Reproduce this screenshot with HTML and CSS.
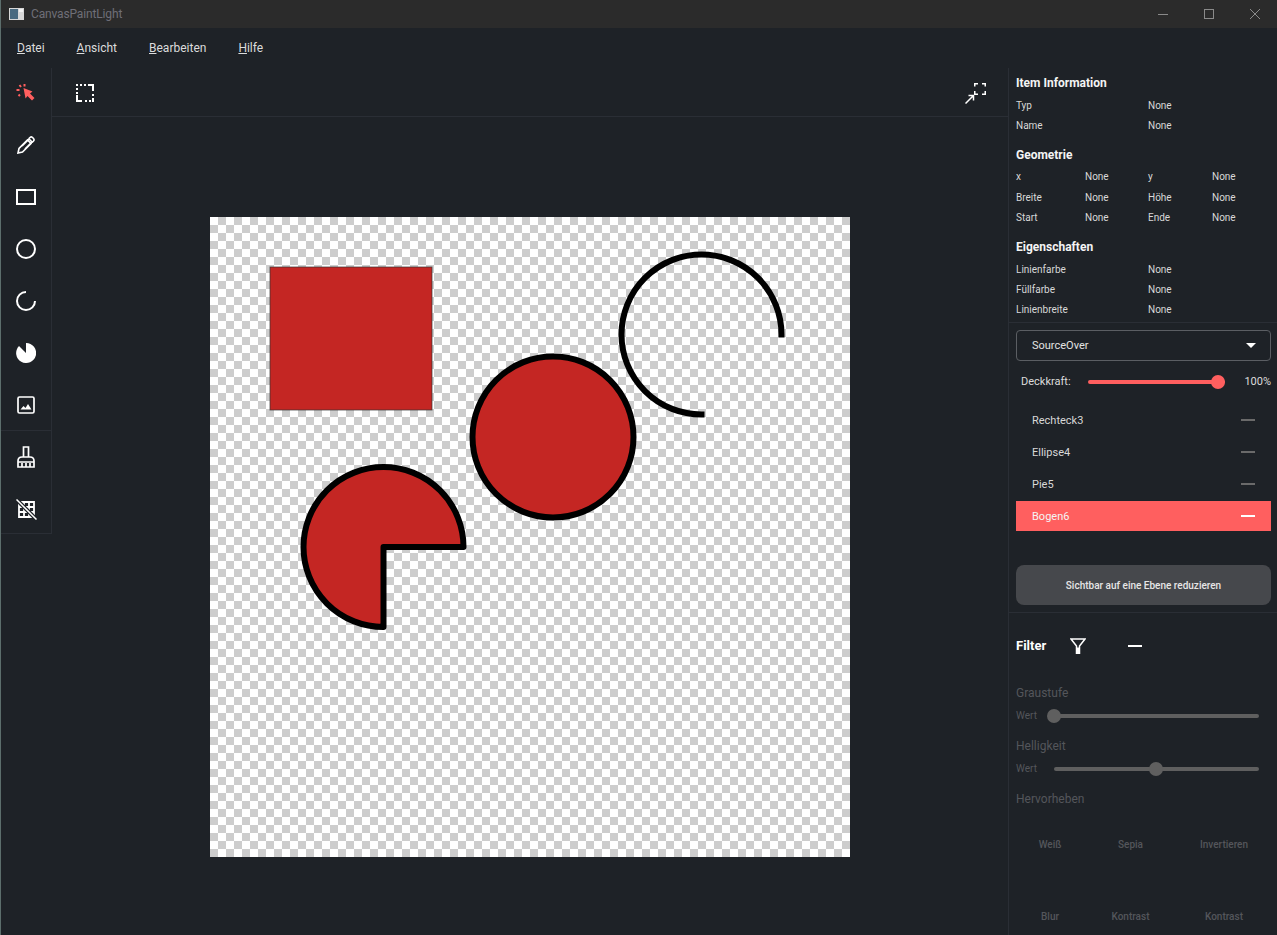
FILE: index.html
```html
<!doctype html>
<html lang="de">
<head>
    <meta charset="UTF-8">
    <title>CanvasPaintLight</title>
    <link rel="stylesheet" href="styles.css">
</head>
<body>
<div class="window">
    <div class="titlebar">
        <svg class="app-icon" width="15" height="12" viewBox="0 0 15 12"><rect width="15" height="12" fill="#d8d8d8"/><rect x="1" y="1" width="8" height="10" fill="#4a6a80"/><rect x="10" y="1" width="4" height="3" fill="#f2f2f2"/></svg>
        <span class="app-name">CanvasPaintLight</span>
        <div class="win-btns">
            <svg width="12" height="12" viewBox="0 0 12 12"><path d="M1 6.500h10" stroke="#8a8a8a" fill="none"/></svg>
            <svg width="12" height="12" viewBox="0 0 12 12"><rect x="1.500" y="1.500" width="9" height="9" stroke="#8a8a8a" fill="none"/></svg>
            <svg width="12" height="12" viewBox="0 0 12 12"><path d="M1 1l10 10M11 1L1 11" stroke="#8a8a8a" fill="none"/></svg>
        </div>
    </div>
    <div class="menubar">
        <span class="menu-item"><u>D</u>atei</span>
        <span class="menu-item"><u>A</u>nsicht</span>
        <span class="menu-item"><u>B</u>earbeiten</span>
        <span class="menu-item"><u>H</u>ilfe</span>
    </div>
    <div class="main">
        <div class="tools">
            <div class="tool-group">
                <div class="tool">
                    <svg width="20" height="20" viewBox="0 0 20 20" fill="none" stroke="#ff5f5f"><path d="M7.500 5l9 3.500-2.500 2 4.500 4.500-2.500 2.500-4.500-4.500-2 2.500z" fill="#ff5f5f" stroke="none"/><path d="M8.500 1v2.500M3.500 2l1.500 2M0.500 7h3M2.500 13l1.500-1.500" stroke-width="2"/></svg>
                </div>
                <div class="tool">
                    <svg width="18" height="18" viewBox="0 0 18 18" fill="none" stroke="#fff" stroke-width="1.600"><path d="M1 17l1-4.500L10.500 4l3.500 3.500L5.500 16z"/><path d="M5 10L12 3l3 3-7 7"/><path d="M12 2.500l1-1c.8-.7 1.700-.7 2.500 0l1 1c.7.800.7 1.700 0 2.500l-1.500 1.500"/></svg>
                </div>
                <div class="tool">
                    <svg width="20" height="16" viewBox="0 0 20 16" fill="none" stroke="#fff" stroke-width="2"><rect x="1" y="1" width="18" height="14"/></svg>
                </div>
                <div class="tool">
                    <svg width="20" height="20" viewBox="0 0 20 20" fill="none" stroke="#fff" stroke-width="2"><circle cx="10" cy="10" r="9"/></svg>
                </div>
                <div class="tool">
                    <svg width="20" height="20" viewBox="0 0 20 20" fill="none" stroke="#fff" stroke-width="2"><path d="M19 10a9 9 0 1 1-9-9"/></svg>
                </div>
                <div class="tool">
                    <svg width="20" height="20" viewBox="0 0 20 20" fill="#fff"><path d="M10 0a10 10 0 1 1-7 3l7 7z"/></svg>
                </div>
                <div class="tool">
                    <svg width="18" height="18" viewBox="0 0 18 18" fill="none"><rect x="1" y="1" width="16" height="16" rx="1.500" stroke="#fff" stroke-width="1.700"/><path d="M3.500 13.500l3-3.500 2 2 2.500-4 3.500 5.500z" fill="#fff"/></svg>
                </div>
            </div>
            <div class="tool-group">
                <div class="tool">
                    <svg width="18" height="22" viewBox="0 0 18 22" fill="none" stroke="#fff" stroke-width="1.700"><path d="M6.500 11V1h5v10M1 21v-6c0-2.500 1.500-4 4-4h8c2.500 0 4 1.500 4 4v6zM1 16h16M5 21v-4M9 21v-4M13 21v-4"/></svg>
                </div>
                <div class="tool">
                    <svg width="21" height="21" viewBox="0 0 21 21" fill="none"><path d="M3 3h15v15H3zM8 3v15M13 3v15M3 8h15M3 13h15" stroke="#fff" stroke-width="1.800"/><path d="M1 1l19 19" stroke="#1e2227" stroke-width="4"/><path d="M0.500 0.500l20 20" stroke="#fff" stroke-width="1.500"/></svg>
                </div>
            </div>
        </div>
        <div class="center">
            <div class="subbar">
                <svg width="18" height="18" viewBox="0 0 18 18" fill="#fff"><path d="M0 0h2v2H0zM4 0h2v2H4zM8 0h2v2H8zM12 0h6v7h-2V2h-4zM0 4h2v2H0zM0 8h2v2H0zM16 10h2v2h-2zM16 14h2v2h-2zM0 11h2v5h4v2H0zM9 16h2v2H9zM13 16h2v2h-2zM16 16h2v2h-2z"/></svg>
                <svg width="21" height="22" viewBox="0 0 21 22" fill="none" stroke="#fff" stroke-width="1.500"><path d="M0.500 21.500L8 14M3.500 13.500h5v5"/><path d="M9.750 4.500V1.750H13M17 1.750h3.250V4.500M20.250 9v3.250H17M13 12.250H9.750V9"/></svg>
            </div>
            <div class="stage">
                <div class="paper">
                    <svg class="drawing" width="640" height="640" viewBox="0 0 640 640">
                        <rect x="60" y="50" width="162" height="143" fill="#c42623" stroke="#333" stroke-opacity="0.7"/>
                        <circle cx="343" cy="220" r="80.500" fill="#c42623" stroke="#000" stroke-width="6"/>
                        <path d="M173.500 330H253.500A80 80 0 1 0 173.500 410z" fill="#c42623" stroke="#000" stroke-width="6" stroke-linejoin="round"/>
                        <path d="M571.500 117.500A80 80 0 1 0 491.500 197.500" fill="none" stroke="#000" stroke-width="6" stroke-linecap="square"/>
                    </svg>
                </div>
            </div>
        </div>
        <div class="side">
            <div class="info-block">
                <h3>Item Information</h3>
                <div class="row-2"><span>Typ</span><span>None</span></div>
                <div class="row-2"><span>Name</span><span>None</span></div>
                <h3 class="gap-head">Geometrie</h3>
                <div class="row-4"><span>x</span><span>None</span><span>y</span><span>None</span></div>
                <div class="row-4"><span>Breite</span><span>None</span><span>Höhe</span><span>None</span></div>
                <div class="row-4"><span>Start</span><span>None</span><span>Ende</span><span>None</span></div>
                <h3 class="gap-head2">Eigenschaften</h3>
                <div class="row-2"><span>Linienfarbe</span><span>None</span></div>
                <div class="row-2"><span>Füllfarbe</span><span>None</span></div>
                <div class="row-2"><span>Linienbreite</span><span>None</span></div>
            </div>
            <div class="layer-block">
                <div class="combo">
                    <span>SourceOver</span>
                    <i class="caret"></i>
                </div>
                <div class="opacity">
                    <span class="opacity-label">Deckkraft:</span>
                    <div class="slider red"><i class="knob"></i></div>
                    <span class="opacity-val">100%</span>
                </div>
                <ul class="layers">
                    <li>Rechteck3<i class="dash"></i></li>
                    <li>Ellipse4<i class="dash"></i></li>
                    <li>Pie5<i class="dash"></i></li>
                    <li class="active">Bogen6<i class="dash"></i></li>
                </ul>
                <div class="flatten">Sichtbar auf eine Ebene reduzieren</div>
            </div>
            <div class="filter-block">
                <div class="filter-head">
                    <span class="filter-title">Filter</span>
                    <svg width="16" height="16" viewBox="0 0 16 16" fill="none" stroke="#fff" stroke-width="1.500"><path d="M1 1H15L9.500 8V15.500H6.500V8Z"/><path d="M6.500 9.500h3v6h-3z" fill="#fff" stroke="none"/></svg>
                    <i class="filter-dash"></i>
                </div>
                <div class="filter-name">Graustufe</div>
                <div class="filter-row">
                    <span>Wert</span>
                    <div class="slider grey"><i class="knob k-start"></i></div>
                </div>
                <div class="filter-name name-2">Helligkeit</div>
                <div class="filter-row">
                    <span>Wert</span>
                    <div class="slider grey"><i class="knob k-mid"></i></div>
                </div>
                <div class="filter-name name-3">Hervorheben</div>
                <div class="effects">
                    <span>Weiß</span><span>Sepia</span><span>Invertieren</span>
                    <span>Blur</span><span>Kontrast</span><span>Kontrast</span>
                </div>
            </div>
        </div>
    </div>
</div>
</body>
</html>
```
FILE: styles.css
```css
* {
    margin: 0;
    padding: 0;
    box-sizing: border-box;
}
html, body {
    height: 100%;
    overflow: hidden;
}
body {
    font-family: Roboto, "Liberation Sans", sans-serif;
    background-color: #1e2227;
    color: #e6e6e6;
    font-size: 10px;
}
.window {
    height: 935px;
    display: flex;
    flex-direction: column;
    border-left: 1px solid #5c6e6c;
}
.titlebar {
    height: 28px;
    background-color: #2b2b2b;
    display: flex;
    align-items: center;
    padding-left: 8px;
    flex-shrink: 0;
}
.app-name {
    margin-left: 7px;
    font-size: 12px;
    color: #6f6f78;
    letter-spacing: -0.15px;
}
.win-btns {
    margin-left: auto;
    display: flex;
    gap: 34px;
    padding-right: 16px;
}
.menubar {
    height: 40px;
    display: flex;
    align-items: center;
    flex-shrink: 0;
    padding-left: 16px;
    gap: 32px;
    font-size: 12px;
    color: #dcdcdc;
}
.main {
    flex: 1;
    display: flex;
    min-height: 0;
}
.tools {
    width: 51px;
    height: 466px;
    border-right: 1px solid #2a2e35;
    border-bottom: 1px solid #2a2e35;
    flex-shrink: 0;
}
.tool-group:first-child {
    margin-top: -1px;
}
.tool-group + .tool-group {
    margin-top: -1px;
    border-top: 1px solid #2a2e35;
}
.tool {
    height: 52px;
    display: flex;
    align-items: center;
    justify-content: center;
}
.center {
    flex: 1;
    display: flex;
    flex-direction: column;
    min-width: 0;
}
.subbar {
    height: 49px;
    border-bottom: 1px solid #2a2e35;
    display: flex;
    align-items: center;
    justify-content: space-between;
    padding: 2px 22px 0 24px;
    flex-shrink: 0;
}
.stage {
    flex: 1;
    padding: 100px 0 0 158px;
}
.paper {
    width: 640px;
    height: 640px;
    background-color: #fff;
    background-image: conic-gradient(#cdcdcd 25%, #fff 0 50%, #cdcdcd 0 75%, #fff 0);
    background-size: 16px 16px;
}
.drawing {
    display: block;
}
.side {
    width: 269px;
    flex-shrink: 0;
    border-left: 1px solid #2a2e35;
    display: flex;
    flex-direction: column;
}
.info-block {
    padding: 7px 6px 0 7px;
    border-bottom: 1px solid #2a2e35;
    height: 255px;
}
.info-block h3 {
    font-size: 12px;
    font-weight: 700;
    color: #f4f4f4;
    line-height: 16px;
    margin-bottom: 8px;
}
.info-block .gap-head {
    margin-top: 8px;
    margin-bottom: 7px;
}
.info-block .gap-head2 {
    margin-top: 7.500px;
    margin-bottom: 8px;
}
.row-2, .row-4 {
    display: grid;
    line-height: 14px;
    color: #d8d8d8;
}
.row-2 {
    height: 20px;
    grid-template-columns: 132px 1fr;
}
.row-4 {
    height: 20.500px;
    grid-template-columns: 69px 63px 64px 1fr;
}
.layer-block {
    height: 290px;
    padding: 7px 6px 0 7px;
    border-bottom: 1px solid #2a2e35;
}
.combo {
    height: 31px;
    border: 1px solid #5b5e63;
    border-radius: 4px;
    padding: 0 14px 0 15px;
    display: flex;
    align-items: center;
    justify-content: space-between;
    font-size: 11px;
    color: #e2e2e2;
}
.caret {
    width: 0;
    height: 0;
    border-left: 5px solid transparent;
    border-right: 5px solid transparent;
    border-top: 5px solid #fff;
}
.opacity {
    height: 41px;
    display: flex;
    align-items: center;
    padding-left: 5px;
    font-size: 11px;
    color: #dcdcdc;
}
.opacity-label {
    width: 67px;
}
.opacity-val {
    margin-left: auto;
    font-size: 11px;
}
.slider {
    position: relative;
    height: 4px;
    border-radius: 2px;
}
.slider.red {
    width: 137px;
    background-color: #ff5f5f;
}
.slider.grey {
    width: 205px;
    background-color: #5f5f5f;
}
.knob {
    position: absolute;
    top: -5px;
    width: 14px;
    height: 14px;
    border-radius: 50%;
}
.red .knob {
    right: 0;
    background-color: #ff5f5f;
}
.grey .knob {
    background-color: #5f5f5f;
}
.k-start {
    left: -7px;
}
.k-mid {
    left: 95px;
}
.layers {
    list-style: none;
    margin-top: 2px;
}
.layers li {
    height: 32px;
    display: flex;
    align-items: center;
    justify-content: space-between;
    padding: 0 16px;
    font-size: 11px;
    color: #d8d8d8;
}
.layers li.active {
    height: 30px;
    margin-top: 1px;
    background-color: #ff5f5f;
    color: #f4f4f4;
}
.dash {
    width: 14px;
    height: 2px;
    background-color: #6a6a6a;
}
.active .dash {
    background-color: #fff;
}
.flatten {
    margin-top: 34px;
    height: 40px;
    border-radius: 8px;
    background-color: #46484c;
    display: flex;
    align-items: center;
    justify-content: center;
    font-weight: 500;
    color: #e6e6e6;
}
.filter-block {
    padding: 0 6px 0 7px;
    flex: 1;
    min-height: 0;
}
.filter-head {
    height: 65px;
    display: flex;
    align-items: center;
}
.filter-title {
    width: 54px;
    font-size: 13px;
    font-weight: 700;
    color: #fff;
}
.filter-dash {
    width: 14px;
    height: 2px;
    background-color: #fff;
    margin-left: 42px;
}
.filter-name {
    font-size: 12px;
    line-height: 16px;
    color: #54565b;
    margin-top: 7px;
}
.filter-name.name-2,
.filter-name.name-3 {
    margin-top: 8px;
}
.filter-row {
    height: 29px;
    display: flex;
    align-items: center;
    justify-content: space-between;
    padding-right: 12px;
    color: #54565b;
}
.effects {
    display: grid;
    grid-template-columns: 68px 93px 94px;
    grid-auto-rows: 72px;
    margin-top: 28px;
    text-align: center;
    font-weight: 500;
    color: #54565b;
    line-height: 20px;
}
```
